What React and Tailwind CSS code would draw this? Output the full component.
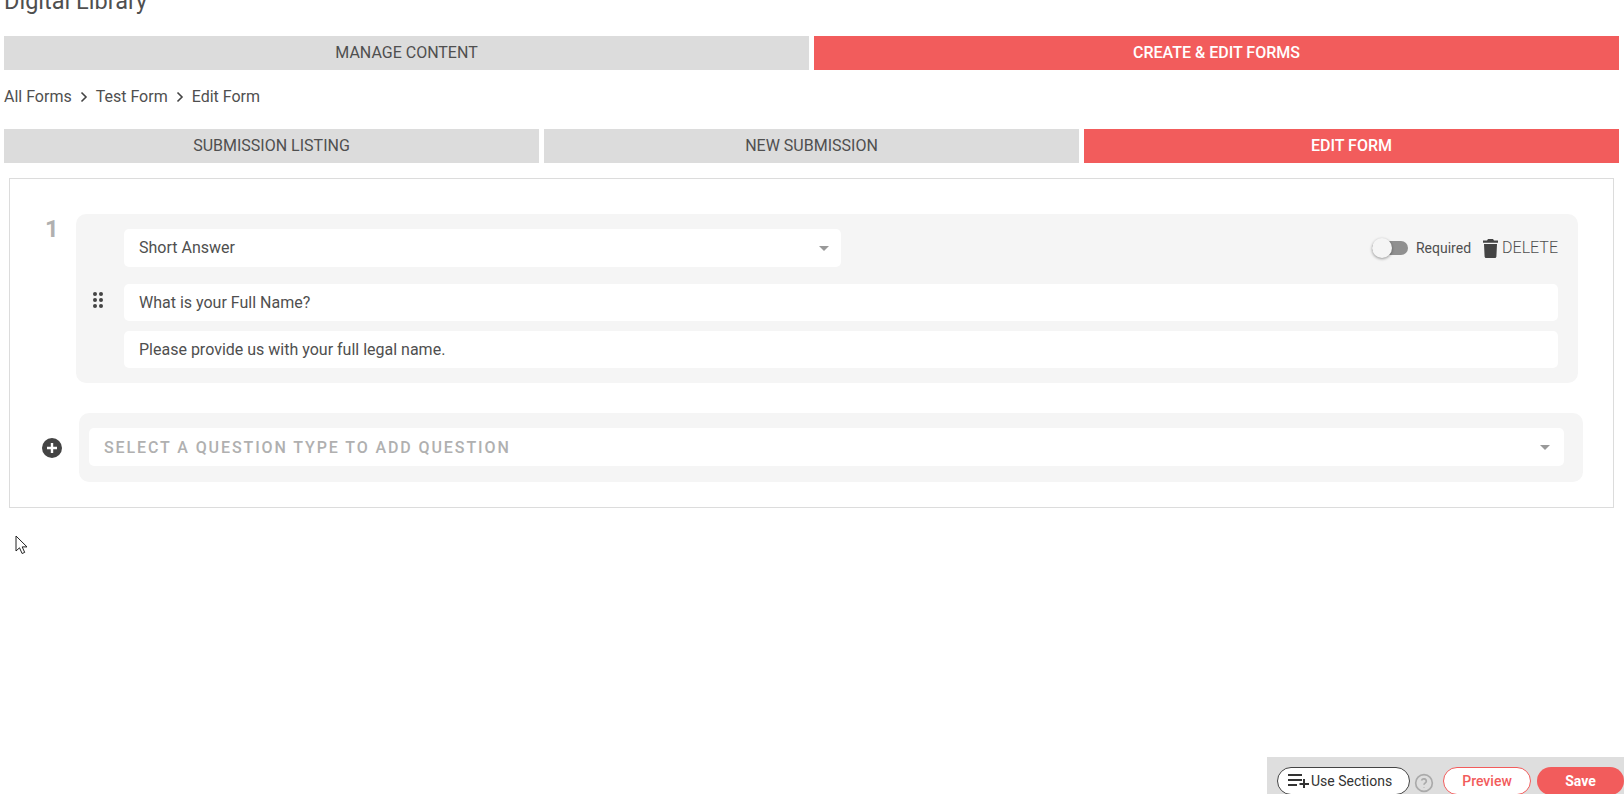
import React from 'react'

function Tab({ label, active }) {
  return (
    <div
      className={`flex-1 h-[34px] flex items-center justify-center text-[16px] ${
        active ? 'bg-[#f25c5c] text-white font-medium' : 'bg-[#dcdcdc] text-[#4f4f4f]'
      }`}
    >
      {label}
    </div>
  )
}

function Chevron() {
  return (
    <svg width="10" height="12" viewBox="0 0 10 12" className="mx-[7px]">
      <path d="M2.5 1.5 7 6l-4.5 4.5" fill="none" stroke="#444" strokeWidth="1.6" />
    </svg>
  )
}

function Caret() {
  return <div className="w-0 h-0 border-x-[5.5px] border-x-transparent border-t-[5px] border-t-[#999]" />
}

function TextRow({ children }) {
  return (
    <div className="h-[37px] bg-white rounded-[5px] px-[15px] flex items-center text-[16px] text-[#4f4f4f]">
      {children}
    </div>
  )
}

function DragDots() {
  return (
    <svg width="12" height="18" viewBox="0 0 12 18" fill="#444">
      <circle cx="3" cy="3" r="2" />
      <circle cx="9" cy="3" r="2" />
      <circle cx="3" cy="9" r="2" />
      <circle cx="9" cy="9" r="2" />
      <circle cx="3" cy="15" r="2" />
      <circle cx="9" cy="15" r="2" />
    </svg>
  )
}

export default function App() {
  return (
    <div className="relative h-[794px] overflow-hidden bg-white font-['Roboto',sans-serif] text-[#4f4f4f]">
      <div className="pl-[4px] pr-[5px]">
        <div className="h-[36px] overflow-hidden">
          <h1 className="text-[23.5px] leading-[28px] -mt-[13px] text-[#4f4f4f]">Digital Library</h1>
        </div>

        <div className="flex gap-[5px]">
          <Tab label="MANAGE CONTENT" />
          <Tab label="CREATE & EDIT FORMS" active />
        </div>

        <div className="h-[59px] pb-[6px] flex items-center text-[16px]">
          <span>All Forms</span>
          <Chevron />
          <span>Test Form</span>
          <Chevron />
          <span>Edit Form</span>
        </div>

        <div className="flex gap-[5px]">
          <Tab label="SUBMISSION LISTING" />
          <Tab label="NEW SUBMISSION" />
          <Tab label="EDIT FORM" active />
        </div>

        <div className="mt-[15px] mx-[5px] h-[330px] border border-[#dcdcdc] pt-[35px] pl-[35px] pr-[35px]">
          <div className="flex">
            <div className="w-[31px] text-[24px] font-bold text-[#b0b0b0] leading-[28px] pt-[1px]">1</div>
            <div className="flex-1 h-[169px] bg-[#f5f5f5] rounded-[10px] pt-[15px] pl-[48px] pr-[20px]">
              <div className="flex items-center justify-between">
                <div className="w-[717px] h-[38px] bg-white rounded-[5px] pl-[15px] pr-[12px] flex items-center justify-between text-[16px]">
                  <span>Short Answer</span>
                  <Caret />
                </div>
                <div className="flex items-center">
                  <div className="relative w-[36px] h-[14px] rounded-full bg-[#909090] mr-[8px]">
                    <div className="absolute left-0 -top-[3px] w-[20px] h-[20px] rounded-full bg-[#f5f5f5] shadow-[0_1px_3px_rgba(0,0,0,0.4)]" />
                  </div>
                  <span className="text-[14px] mr-[12px]">Required</span>
                  <svg width="15" height="19" viewBox="0 0 15 19" fill="#444" className="mr-[4px]">
                    <path d="M5 0h5l1 1.5h4v2.2H0V1.5h4zM1 5h13l-.6 12.5c0 .8-.7 1.5-1.5 1.5H3.1c-.8 0-1.5-.7-1.5-1.5z" />
                  </svg>
                  <span className="text-[16px] font-light">DELETE</span>
                </div>
              </div>

              <div className="relative mt-[17px]">
                <div className="absolute -left-[32px] top-[7px]">
                  <DragDots />
                </div>
                <TextRow>What is your Full Name?</TextRow>
                <div className="mt-[10px]">
                  <TextRow>Please provide us with your full legal name.</TextRow>
                </div>
              </div>
            </div>
          </div>

          <div className="mt-[30px] -mr-[5px] flex items-center">
            <svg width="20" height="20" viewBox="0 0 20 20" className="mr-[17px] -ml-[3px]">
              <circle cx="10" cy="10" r="10" fill="#444" />
              <path d="M10 5v10M5 10h10" stroke="#fff" strokeWidth="2.4" />
            </svg>
            <div className="flex-1 h-[69px] bg-[#f5f5f5] rounded-[10px] pl-[10px] pr-[19px] pb-[1px] flex items-center">
              <div className="flex-1 h-[38px] bg-white rounded-[5px] pl-[15px] pr-[14px] pt-[1px] flex items-center justify-between">
                <span className="text-[16px] font-medium tracking-[1.9px] text-[#b0b0b0]">SELECT A QUESTION TYPE TO ADD QUESTION</span>
                <Caret />
              </div>
            </div>
          </div>
        </div>
      </div>

      {/* mouse cursor caught in the capture */}
      <svg width="14" height="20" viewBox="0 0 14 20" className="absolute left-[15px] top-[535px]">
        <path d="M1 1v15l3.5-3.2 2.6 5.7 2.6-1.1-2.5-5.5H12z" fill="#fff" stroke="#222" strokeWidth="1" />
      </svg>

      {/* action bar pinned to the bottom right */}
      <div className="absolute right-0 bottom-0 w-[357px] h-[37px] bg-[#dedede] pt-[10px] pl-[10px] flex items-start">
        <div className="w-[133px] h-[28px] rounded-full bg-white border border-[#444] flex items-center pl-[10px] text-[14px] text-[#333]">
          <svg width="21" height="16" viewBox="0 0 21 16" fill="none" stroke="#333" strokeWidth="2" className="mr-[2px] -mt-[2px]">
            <path d="M0 3h14M0 8h14M0 13h9M16 7v9M11.5 12H21" />
          </svg>
          Use Sections
        </div>
        <svg width="20" height="20" viewBox="0 0 24 24" fill="none" stroke="#aaa" strokeWidth="2" className="ml-[4px] mt-[6px]">
          <circle cx="12" cy="12" r="10" />
          <path d="M9 9a3 3 0 0 1 5.8 1c0 2-2.8 2.4-2.8 4M12 17.5v.5" />
        </svg>
        <div className="ml-[9px] w-[88px] h-[28px] rounded-full bg-white border border-[#f25c5c] flex items-center justify-center text-[14px] font-medium text-[#f25c5c]">Preview</div>
        <div className="ml-[6px] w-[87px] h-[28px] rounded-full bg-[#f25c5c] flex items-center justify-center text-[14px] font-bold text-white">Save</div>
      </div>
    </div>
  )
}
